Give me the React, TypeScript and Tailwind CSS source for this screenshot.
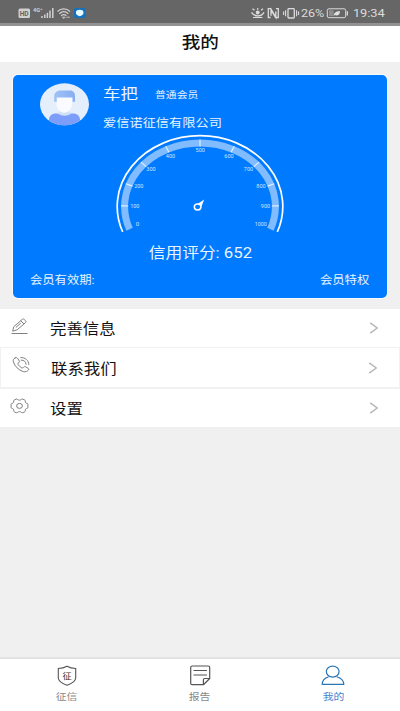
import type { ReactNode } from 'react';
import clsx from 'clsx';

interface WideTextProps {
  children: ReactNode;
  className?: string;
}

/** Text set slightly wider than the font's own proportions. */
function WideText({ children, className = 'origin-left' }: WideTextProps) {
  return <span className={clsx('inline-block scale-x-[1.14] whitespace-nowrap', className)}>{children}</span>;
}

function StatusBar() {
  return (
    <div className="flex h-[26px] shrink-0 items-center border-b-[3px] border-[#929292] bg-[#666666] pt-[3px] text-[#dcdcdc]">
      <svg className="h-[26px] w-[100px]" viewBox="0 0 100 26" fill="none">
        <rect x="18.5" y="8.5" width="11.5" height="9.5" rx="1.5" fill="#d0d0d0" />
        <text x="19.7" y="16.2" fontSize="7.5" fontWeight="700" textLength="9" lengthAdjust="spacingAndGlyphs" fill="#666">HD</text>
        <text x="33" y="12" fontSize="5.5" fontWeight="700" textLength="9.5" lengthAdjust="spacingAndGlyphs" fill="#d0d0d0">4G⁺</text>
        <path d="M42 18v-2M44.8 18v-3.5M47.4 18v-5.3M50 18v-7.5M52.8 18V8" stroke="#d0d0d0" strokeWidth="1.5" />
        <path d="M57.5 11.5c3.5-3.4 9-3.4 12.5 0M59.3 13.7c2.7-2.6 6.3-2.6 9 0M61.2 15.8c1.6-1.5 3.6-1.5 5.2 0" stroke="#d0d0d0" strokeWidth="1.2" />
        <path d="M62.4 17.2l1.5 1.3 1.3-1.3zM66.5 17.2h3.3" stroke="#d0d0d0" strokeWidth=".9" />
        <rect x="74" y="8" width="11.5" height="10" rx="1.5" fill="#1671bd" />
        <path d="M76 11.8c0-1.200 1.700-2.100 3.700-2.100s3.700.9 3.700 2.100v1.400c0 1.300-1.700 2.600-3.700 3.100-2-.5-3.700-1.800-3.700-3.100z" fill="#e8faff" />
      </svg>
      <svg className="ml-[149px] h-[26px] w-[52px]" viewBox="0 0 52 26" fill="none" stroke="currentColor">
        <path d="M2.500 12.300c3 4.800 9.500 4.800 12.500 0" strokeWidth="1.300" />
        <path d="M3.500 8.700l2 1.500M8.700 8v1.800M14 8.700l-2 1.500M4 17.500h9.500" strokeWidth="1.200" />
        <circle cx="8.700" cy="12.500" r="1.900" fill="currentColor" stroke="none" />
        <path d="M21.500 17.500h-2.200V8.700h2.500l5 8.700V11.500M27 8.700h2.300v8.800h-2.700L22 9.700v6" strokeWidth="1.300" />
        <rect x="39" y="8.600" width="6.300" height="9.400" rx=".8" strokeWidth="1.300" />
        <path d="M36.600 10.300v6M34.600 11.500v3.600M47.600 10.300v6M49.600 11.500v3.600" strokeWidth="1.100" />
      </svg>
      <span className="flex w-[25px] items-center pt-[2px] text-[11px]">
        <WideText>26%</WideText>
      </span>
      <svg className="h-[26px] w-[24px]" viewBox="0 0 24 26" fill="none">
        <rect x="1.300" y="8.800" width="18.400" height="8.900" rx="1.600" stroke="currentColor" />
        <rect x="3" y="10.300" width="4.600" height="5.900" fill="#8e8e8e" />
        <path d="M21.300 11.200v4.200" stroke="currentColor" strokeWidth="1.300" />
        <path d="M7.800 15.900c0-3.200 2.100-4.700 6.200-5-.1 3.800-2.300 5.400-5.200 4.200z" fill="#e2e2e2" />
      </svg>
      <span className="pt-[2px] pl-[3px] text-[11.3px]">
        <WideText className="origin-left tracking-[-0.1px]">19:34</WideText>
      </span>
    </div>
  );
}

function Avatar() {
  return (
    <svg className="h-[43px] w-[50px]" viewBox="0 0 50 43">
      <defs>
        <clipPath id="avatar">
          <ellipse cx="24.5" cy="21.3" rx="24.5" ry="21" />
        </clipPath>
        <linearGradient id="hair" x1="0" y1="0" x2="1" y2="0">
          <stop offset="0" stopColor="#9fc2f5" />
          <stop offset="1" stopColor="#89aef0" />
        </linearGradient>
      </defs>
      <g clipPath="url(#avatar)">
        <rect width="50" height="43" fill="#e5effc" />
        <path d="M9 44v-7c0-4.200 2.700-6.600 7-6.600h17c4.200 0 7 2.400 7 6.600v7z" fill="#7c9dfa" />
        <path d="M18 30.300c1.500 3.300 11.500 3.300 13 0l-3-3.500h-7z" fill="#d3e1f7" />
        <path d="M16.600 13h15.400v7.500c0 5.500-3.400 9.300-7.700 9.300s-7.700-3.800-7.700-9.300z" fill="#f9fbff" />
        <path d="M14.200 18.800v-5.600c0-3.800 2.800-5.700 7-5.700h8.500c3.200 0 5.300 2 5.300 5.300v6h-2.400v-4.300H16.700v4.300z" fill="url(#hair)" />
      </g>
    </svg>
  );
}

// angle from the top of the dial, with the position of its label
const TICKS = [
  { value: 0, angle: -111, x: 137.5, y: 224.5 },
  { value: 100, angle: -89.5, x: 134.8, y: 206 },
  { value: 200, angle: -70.2, x: 138.8, y: 186.3 },
  { value: 300, angle: -48.5, x: 151, y: 169.5 },
  { value: 400, angle: -25.7, x: 170.5, y: 156 },
  { value: 500, angle: 0, x: 200.2, y: 149.8 },
  { value: 600, angle: 25.7, x: 229, y: 156 },
  { value: 700, angle: 48.5, x: 248.5, y: 169.5 },
  { value: 800, angle: 70.2, x: 261, y: 186.3 },
  { value: 900, angle: 89.5, x: 265.5, y: 206 },
  { value: 1000, angle: 111, x: 260.8, y: 224.5 },
];

function dialPoint(angle: number, rx: number, ry: number) {
  const rad = (angle * Math.PI) / 180;
  return { x: 200 + rx * Math.sin(rad), y: 206.5 - ry * Math.cos(rad) };
}

function dialArc(rx: number, ry: number) {
  const from = dialPoint(-111, rx, ry);
  const to = dialPoint(111, rx, ry);
  return `M${from.x} ${from.y}A${rx} ${ry} 0 1 1 ${to.x} ${to.y}`;
}

function ScoreGauge() {
  return (
    <svg className="mx-auto h-[106px] w-[176px]" viewBox="112 131 176 106" fill="none">
      <path d={dialArc(82.8, 70.8)} stroke="#fff" strokeWidth="1.7" />
      <path d={dialArc(75.4, 63.5)} stroke="#80bcff" strokeWidth="7" />
      {TICKS.map(({ value, angle, x, y }) => {
        const a = dialPoint(angle, 78.8, 66.9);
        const b = dialPoint(angle, 71.8, 60.1);
        return (
          <g key={value}>
            {value > 0 && value < 1000 && (
              <path d={`M${a.x} ${a.y}L${b.x} ${b.y}`} stroke="#e5f2ff" strokeWidth="1.1" />
            )}
            <text
              x={x}
              y={y + 1.9}
              fontSize="5.2"
              textAnchor="middle"
              textLength={value === 0 ? 3.5 : value === 1000 ? 12 : 9.3}
              lengthAdjust="spacingAndGlyphs"
              fill="#cfe6ff"
            >
              {value}
            </text>
          </g>
        );
      })}
      <ellipse cx="197.600" cy="207" rx="3.300" ry="2.900" stroke="#fff" strokeWidth="1.500" />
      <path d="M197.800 203.700l6.400-4.300-2.700 7-1.600-2z" fill="#fff" />
    </svg>
  );
}

function MemberCard() {
  return (
    <section className="mx-[13px] mt-[13px] flex h-[223px] shrink-0 flex-col rounded-[5px] bg-[#007aff] text-[#e9f4ff] ring-1 ring-white/60">
      <div className="flex h-[56px] pt-[8px] pl-[27px]">
        <Avatar />
        <div className="ml-[13px]">
          <div className="flex h-[24px] items-center text-[15.3px] leading-none">
            <span className="w-[52px]">
              <WideText>车把</WideText>
            </span>
            <span className="text-[9.5px]">
              <WideText>普通会员</WideText>
            </span>
          </div>
          <div className="mt-[10px] h-[12px] text-[11.6px] leading-[12px]">
            <WideText>爱信诺征信有限公司</WideText>
          </div>
        </div>
      </div>
      <ScoreGauge />
      <p className="mt-[6px] text-center text-[14.7px] leading-[20px]">
        <WideText className="origin-center">信用评分: 652</WideText>
      </p>
      <div className="mt-[10px] flex justify-between pr-[18px] pl-[17px] text-[10.8px] leading-[16px]">
        <WideText>会员有效期:</WideText>
        <WideText className="origin-right">会员特权</WideText>
      </div>
    </section>
  );
}

function PencilIcon() {
  return (
    <svg className="h-[20px] w-[20px]" viewBox="0 0 20 20" fill="none" stroke="#808080" strokeWidth="1">
      <path d="M2.700 15.200l1-4.400 8.500-7.400c.7-.6 1.400-.5 2 .1l1.300 1.200c.7.7.6 1.400-.1 2l-8.200 7.100zM10.700 4.800l3.300 3.100M5.800 11.500l5-4.400M1.500 17.500h16" />
    </svg>
  );
}

function CallIcon() {
  return (
    <svg className="h-[20px] w-[20px]" viewBox="0 0 20 20" fill="none" stroke="#808080" strokeWidth="1" strokeLinejoin="round" strokeLinecap="round">
      <path d="M4.200 2.800C2.300 3.700 1.800 5.100 2.400 7c1.400 4.300 5.200 8.100 9.800 9.600 2.100.6 4.400-.3 5.400-1.700.4-.6.2-1.100-.4-1.500l-2.600-1.600c-.7-.4-1.300-.3-1.800.2l-.8.8c-.4.4-.8.3-1.300 0-1.600-.9-2.800-2-3.700-3.300-.4-.6-.4-.9.1-1.200l.9-.7c.6-.4.7-.9.4-1.500L6.600 3.400c-.5-.9-1.400-1-2.400-.6zM9.800 2.500c4.300-.1 8.100 2.800 8 7M10.200 5.100c3 0 4.800 1.700 4.900 4.200" />
    </svg>
  );
}

function GearIcon() {
  return (
    <svg className="h-[20px] w-[20px]" viewBox="0 0 20 20" fill="none" stroke="#808080" strokeWidth="1" strokeLinejoin="round">
      <path d="M7.600 3.400c1.100 1 2.700 1 3.800 0 .4-.4.900-.5 1.400-.3l1.900.9c.5.2.7.6.6 1.100-.2 1.300.6 2.200 1.800 2.300.5.100.8.400.8.900v3.200c0 .5-.3.800-.8.900-1.200.1-2 1-1.800 2.300.1.500-.1.900-.6 1.100l-1.900.9c-.5.2-1 .1-1.400-.3-1.100-1-2.700-1-3.800 0-.4.400-.9.500-1.400.3l-1.900-.9c-.5-.2-.7-.6-.6-1.100.2-1.300-.6-2.200-1.800-2.300-.5-.1-.8-.4-.8-.9V8.300c0-.5.300-.8.800-.9 1.200-.1 2-1 1.800-2.300-.1-.5.1-.9.600-1.100l1.900-.9c.5-.2 1-.1 1.400.3z" />
      <ellipse cx="9.500" cy="9.900" rx="2.900" ry="2.500" />
    </svg>
  );
}

interface MenuRowProps {
  icon: ReactNode;
  label: string;
  className?: string;
}

function MenuRow({ icon, label, className }: MenuRowProps) {
  return (
    <li className={clsx('flex items-center bg-white pl-[10px] text-[14.4px] text-[#111]', className)}>
      <span className="mb-[5px] w-[40px]">{icon}</span>
      <span className="pt-[4px]">
        <WideText>{label}</WideText>
      </span>
      <svg className="mr-[21px] ml-auto h-[12px] w-[10px]" viewBox="0 0 10 12" fill="none" stroke="#b8b8b8" strokeWidth="1.5">
        <path d="M1.200 .9l7 5.100-7 5.100" />
      </svg>
    </li>
  );
}

interface TabProps {
  icon: ReactNode;
  label: string;
  active?: boolean;
}

function Tab({ icon, label, active = false }: TabProps) {
  return (
    <li className={clsx('flex flex-1 flex-col items-center pt-[5px] text-[9.5px]', active ? 'text-[#4a7fd0]' : 'text-[#888]')}>
      {icon}
      <span className="mt-[2px] leading-[14px]">
        <WideText className="origin-center">{label}</WideText>
      </span>
    </li>
  );
}

function TabBar() {
  return (
    <ul className="flex h-[54px] shrink-0 border-t-2 border-[#e3e3e3] bg-white">
      <Tab
        label="征信"
        icon={
          <svg className="h-[24px] w-[24px]" viewBox="0 0 24 24" fill="none">
            <path d="M12 2.200c2.600 1.500 5.500 2.200 8.700 2.300v9.300c0 3.300-3.700 5.700-8.700 7.500-5-1.800-8.700-4.200-8.700-7.500V4.500C6.500 4.400 9.400 3.700 12 2.200z" stroke="#555" strokeWidth="1.1" />
            <text x="12" y="14.800" fontSize="8.300" textAnchor="middle" textLength="9.200" lengthAdjust="spacingAndGlyphs" fill="#333">征</text>
          </svg>
        }
      />
      <Tab
        label="报告"
        icon={
          <svg className="h-[24px] w-[24px]" viewBox="0 0 24 24" fill="none" stroke="#555" strokeWidth="1.2">
            <path d="M21.700 14.500V3.500c0-.9-.5-1.500-1.500-1.500H4.200C3.200 2 2.700 2.600 2.700 3.500v15.700c0 .9.500 1.500 1.500 1.500h11.200z" strokeLinejoin="round" />
            <path d="M21.700 14.500h-5c-.8 0-1.300.4-1.300 1.200v5M5.500 6.500h13.400M5.500 11h13.400" />
          </svg>
        }
      />
      <Tab
        active
        label="我的"
        icon={
          <svg className="h-[24px] w-[24px]" viewBox="0 0 24 24" fill="none" stroke="#2b76b5" strokeWidth="1.2" strokeLinejoin="round">
            <ellipse cx="11.700" cy="7.600" rx="6.400" ry="5.500" />
            <path d="M7.700 12.700C3.700 13.900 1.200 16.900 1.200 20.400h21.600c0-3.500-3.100-6.500-7.100-7.700" />
          </svg>
        }
      />
    </ul>
  );
}

export default function App() {
  return (
    <div className="flex h-[711px] w-[400px] flex-col overflow-hidden bg-[#f0f0f0] font-[Roboto,'Noto_Sans_CJK_SC',sans-serif]">
      <StatusBar />
      <header className="flex h-[36px] shrink-0 items-center justify-center bg-white pb-[1px] text-[16.3px] font-medium text-[#111]">
        <WideText className="origin-center">我的</WideText>
      </header>
      <MemberCard />
      <ul className="mt-[11px] flex flex-col">
        <MenuRow icon={<PencilIcon />} label="完善信息" className="h-[38px]" />
        <MenuRow icon={<CallIcon />} label="联系我们" className="h-[42px] border border-b-2 border-[#f1f1f1]" />
        <MenuRow icon={<GearIcon />} label="设置" className="h-[38px]" />
      </ul>
      <div className="flex-1" />
      <TabBar />
    </div>
  );
}
